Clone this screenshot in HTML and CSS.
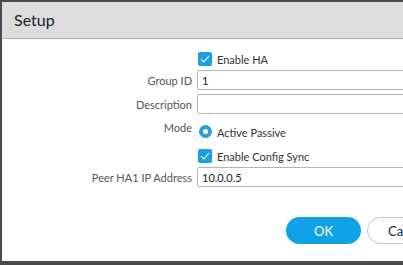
FILE: index.html
```html
<!DOCTYPE html>
<html lang="en">
<head>
    <meta charset="UTF-8">
    <meta name="viewport" content="width=device-width, initial-scale=1.0">
    <title>Setup</title>
    <link rel="stylesheet" href="styles.css">
</head>
<body>
    <div class="dialog">
        <div class="dialog-header">Setup</div>
        <form class="dialog-body">
            <div class="row row-check">
                <span class="label"></span>
                <label class="check"><span class="box"><svg width="10" height="8" viewBox="0 0 10 8"><path d="M1 4.2 L3.8 7 L9 1" fill="none" stroke="#fff" stroke-width="1.1"/></svg></span>Enable HA</label>
            </div>
            <div class="row">
                <span class="label">Group ID</span>
                <input type="text" class="field" value="1">
            </div>
            <div class="row">
                <span class="label">Description</span>
                <input type="text" class="field" value="">
            </div>
            <div class="row row-mode">
                <span class="label">Mode</span>
                <label class="radio"><span class="dot"></span><span class="radio-text">Active Passive</span></label>
            </div>
            <div class="row row-check">
                <span class="label"></span>
                <label class="check"><span class="box"><svg width="10" height="8" viewBox="0 0 10 8"><path d="M1 4.2 L3.8 7 L9 1" fill="none" stroke="#fff" stroke-width="1.1"/></svg></span>Enable Config Sync</label>
            </div>
            <div class="row">
                <span class="label">Peer HA1 IP Address</span>
                <input type="text" class="field" value="10.0.0.5">
            </div>
            <div class="buttons">
                <button type="button" class="btn btn-ok">OK</button>
                <button type="button" class="btn btn-cancel">Cancel</button>
            </div>
        </form>
    </div>
</body>
</html>
```

FILE: styles.css
```css
body {
    margin: 0;
    background-color: #4a4a4a;
    font-family: Lato, "Liberation Sans", sans-serif;
    overflow: hidden;
    height: 265px;
}
.dialog {
    margin: 2px 0 0 2px;
    width: 460px;
    height: 259px;
    background-color: #fff;
}
.dialog-header {
    height: 36px;
    line-height: 35px;
    padding-left: 12px;
    background-color: #dcdddf;
    border-bottom: 1px solid #aeb1b4;
    font-size: 16px;
    color: #222;
}
.dialog-body {
    padding-top: 13px;
    display: flex;
    flex-direction: column;
    gap: 4px;
}
.row {
    display: flex;
    align-items: center;
    height: 20px;
}
.row-check {
    height: 14px;
}
.row-mode {
    height: 27px;
    align-items: flex-start;
}
.label {
    width: 190px;
    flex: none;
    text-align: right;
    font-size: 11px;
    color: #555;
    margin-right: 5px;
}
.row-mode .label {
    line-height: 16px;
    padding-top: 2px;
}
.field {
    box-sizing: border-box;
    width: 240px;
    height: 20px;
    margin: 0;
    padding: 0 4px;
    border: 1px solid #b4b4b4;
    border-radius: 2px;
    font-family: Lato, "Liberation Sans", sans-serif;
    font-size: 11px;
    color: #222;
}
.check {
    display: flex;
    align-items: center;
    font-size: 11px;
    color: #333;
    margin-left: 1px;
}
.box {
    width: 14px;
    height: 14px;
    border-radius: 2px;
    background-color: #1c9ee2;
    display: flex;
    align-items: center;
    justify-content: center;
    margin-right: 5px;
}
.radio {
    display: flex;
    align-items: flex-start;
    font-size: 11px;
    color: #333;
    margin-left: 2px;
}
.dot {
    box-sizing: border-box;
    width: 13px;
    height: 13px;
    margin-top: 7px;
    border-radius: 50%;
    border: 4px solid #2b9be0;
    background-color: #fff;
    margin-right: 5px;
}
.radio-text {
    line-height: 16px;
    padding-top: 7px;
}
.buttons {
    display: flex;
    gap: 6px;
    padding: 26px 0 0 284px;
}
.btn {
    height: 27px;
    border-radius: 14px;
    font-family: Lato, "Liberation Sans", sans-serif;
    font-size: 13px;
    padding: 0;
}
.btn-ok {
    width: 75px;
    border: none;
    background-color: #0fa2e6;
    color: #fff;
}
.btn-cancel {
    width: 75px;
    border: 1px solid #c4c4c4;
    background-color: #fff;
    color: #222;
    text-align: left;
    padding-left: 20px;
}
```
